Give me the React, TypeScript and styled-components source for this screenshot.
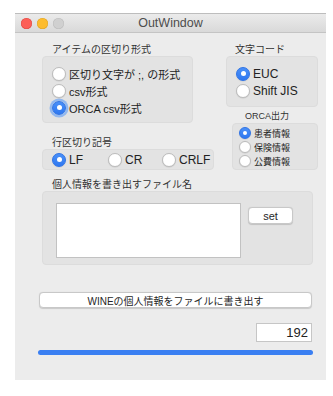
import styled, { createGlobalStyle } from 'styled-components'

const Global = createGlobalStyle`
  body {
    margin: 0;
    background: #ffffff;
    font-family: "Liberation Sans", "Noto Sans CJK JP", sans-serif;
  }
`

const Window = styled.div`
  margin: 13px 0 0 15px;
  width: 311px;
  height: 367px;
  background: #ececec;
  display: flex;
  flex-direction: column;
  box-sizing: border-box;
  border-top: 1px solid #bdbdbd;
`

const TitleBar = styled.div`
  height: 18px;
  display: flex;
  align-items: center;
  position: relative;
  padding-left: 6px;
  gap: 5px;
  background: linear-gradient(#ebebeb, #d9d9d9);
  border-bottom: 1px solid #c4c4c4;
`

const Light = styled.span<{ $color: string; $border: string }>`
  width: 11px;
  height: 11px;
  border-radius: 50%;
  background: ${p => p.$color};
  box-shadow: inset 0 0 0 0.5px ${p => p.$border};
`

const Title = styled.div`
  position: absolute;
  left: 0;
  right: 0;
  text-align: center;
  font-size: 12.5px;
  color: #4d4d4d;
`

const Body = styled.div`
  display: flex;
  flex-direction: column;
  padding: 10px 8px 0 23px;
`

const Top = styled.div`
  display: flex;
  justify-content: space-between;
  align-items: flex-start;
`

const LeftCol = styled.div`
  display: flex;
  flex-direction: column;
  width: 172px;
  margin-left: 4px;
`

const RightCol = styled.div`
  display: flex;
  flex-direction: column;
  align-items: flex-end;
  width: 92px;
`

const Label = styled.div<{ $indent?: number; $size?: number; $top?: number }>`
  font-size: ${p => p.$size ?? 10}px;
  line-height: 13px;
  height: 13px;
  color: #333;
  padding-left: ${p => p.$indent ?? 10}px;
  margin-top: ${p => p.$top ?? 0}px;
  align-self: stretch;
  white-space: nowrap;
`

const Box = styled.div<{ $w: number; $h: number; $pad: string; $row?: boolean }>`
  box-sizing: border-box;
  width: ${p => p.$w}px;
  height: ${p => p.$h}px;
  padding: ${p => p.$pad};
  background: #e3e3e3;
  border: 1px solid #dcdcdc;
  border-radius: 4px;
  display: flex;
  flex-direction: ${p => (p.$row ? 'row' : 'column')};
  align-items: ${p => (p.$row ? 'center' : 'stretch')};
`

const Option = styled.div<{ $h: number; $w?: number; $size: number }>`
  height: ${p => p.$h}px;
  width: ${p => (p.$w ? `${p.$w}px` : 'auto')};
  display: flex;
  align-items: center;
  gap: 3px;
  font-size: ${p => p.$size}px;
  color: #222;
  white-space: nowrap;
`

const Dot = styled.span<{ $on?: boolean; $d: number; $focus?: boolean }>`
  box-sizing: border-box;
  width: ${p => p.$d}px;
  height: ${p => p.$d}px;
  flex: none;
  border-radius: 50%;
  display: flex;
  align-items: center;
  justify-content: center;
  background: ${p => (p.$on ? 'linear-gradient(#4a90f8, #2f78f0)' : '#ffffff')};
  border: 1px solid ${p => (p.$on ? '#2d72e6' : '#bcbcbc')};
  box-shadow: ${p => (p.$focus ? '0 0 0 2.5px rgba(80, 150, 250, 0.55)' : '0 0.5px 1px rgba(0,0,0,0.12)')};
  &::after {
    content: '';
    display: ${p => (p.$on ? 'block' : 'none')};
    width: ${p => Math.round(p.$d * 0.36)}px;
    height: ${p => Math.round(p.$d * 0.36)}px;
    border-radius: 50%;
    background: #ffffff;
  }
`

const FileRow = styled.div`
  display: flex;
  align-items: flex-start;
`

const TextArea = styled.div`
  box-sizing: border-box;
  width: 185px;
  height: 55px;
  background: #ffffff;
  border: 1px solid #c2c2c2;
`

const Button = styled.div<{ $w?: number; $h: number; $size: number }>`
  box-sizing: border-box;
  width: ${p => (p.$w ? `${p.$w}px` : 'auto')};
  height: ${p => p.$h}px;
  background: #ffffff;
  border: 1px solid #c8c8c8;
  border-radius: 4px;
  box-shadow: 0 0.5px 1px rgba(0,0,0,0.15);
  display: flex;
  align-items: center;
  justify-content: center;
  font-size: ${p => p.$size}px;
  color: #262626;
`

const SetButton = styled(Button)`
  margin: 4px 0 0 7px;
`

const WideButton = styled(Button)`
  margin: 27px 6px 0 1px;
`

const NumberField = styled.div`
  box-sizing: border-box;
  align-self: flex-end;
  margin: 15px 6px 0 0;
  width: 56px;
  height: 19px;
  background: #ffffff;
  border: 1px solid #c6c6c6;
  font-size: 13px;
  color: #222;
  text-align: right;
  line-height: 17px;
  padding-right: 3px;
`

const Progress = styled.div`
  margin: 8px 5px 0 0;
  height: 5px;
  border-radius: 3px;
  background: #3a7ff2;
`

type Opt = { label: string; on?: boolean; focus?: boolean; w?: number }

const Options = ({ items, h, size, d }: { items: Opt[]; h: number; size: number; d: number }) => (
  <>
    {items.map(o => (
      <Option key={o.label} $h={h} $w={o.w} $size={size}>
        <Dot $on={o.on} $d={d} $focus={o.focus} />
        {o.label}
      </Option>
    ))}
  </>
)

export default function App() {
  return (
    <>
      <Global />
      <Window>
        <TitleBar>
          <Light $color="#fc5f57" $border="#de4a43" />
          <Light $color="#fdbc2e" $border="#dda327" />
          <Light $color="#d0d0d0" $border="#bcbcbc" />
          <Title>OutWindow</Title>
        </TitleBar>
        <Body>
          <Top>
            <LeftCol>
              <Label>アイテムの区切り形式</Label>
              <Box $w={151} $h={67} $pad="8px 0 0 9px">
                <Options
                  h={17}
                  size={11}
                  d={14}
                  items={[
                    { label: '区切り文字が ;, の形式' },
                    { label: 'csv形式' },
                    { label: 'ORCA csv形式', on: true, focus: true },
                  ]}
                />
              </Box>
              <Label $top={13}>行区切り記号</Label>
              <Box $w={172} $h={21} $pad="0 0 0 9px" $row>
                <Options
                  h={19}
                  size={12}
                  d={14}
                  items={[
                    { label: 'LF', on: true, w: 56 },
                    { label: 'CR', w: 54 },
                    { label: 'CRLF' },
                  ]}
                />
              </Box>
            </LeftCol>
            <RightCol>
              <Label $indent={9}>文字コード</Label>
              <Box $w={92} $h={51} $pad="8px 0 0 9px">
                <Options
                  h={17}
                  size={12}
                  d={14}
                  items={[{ label: 'EUC', on: true }, { label: 'Shift JIS' }]}
                />
              </Box>
              <Label $indent={19} $size={9} $top={3}>ORCA出力</Label>
              <Box $w={86} $h={47} $pad="2px 0 0 6px">
                <Options
                  h={14}
                  size={9}
                  d={12}
                  items={[{ label: '患者情報', on: true }, { label: '保険情報' }, { label: '公費情報' }]}
                />
              </Box>
            </RightCol>
          </Top>
          <Label $top={8} style={{ marginLeft: 4 }}>個人情報を書き出すファイル名</Label>
          <Box $w={271} $h={74} $pad="11px 0 0 13px" style={{ marginLeft: 4 }}>
            <FileRow>
              <TextArea />
              <SetButton $w={45} $h={17} $size={11}>set</SetButton>
            </FileRow>
          </Box>
          <WideButton $h={16} $size={10}>WINEの個人情報をファイルに書き出す</WideButton>
          <NumberField>192</NumberField>
          <Progress />
        </Body>
      </Window>
    </>
  )
}
